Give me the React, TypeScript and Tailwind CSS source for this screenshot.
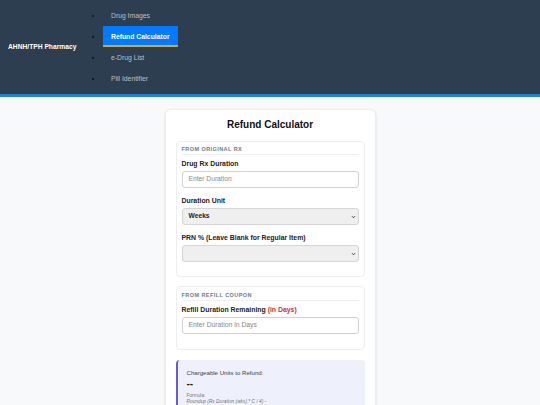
import React from 'react';

const navItems = ['Drug Images', 'Refund Calculator', 'e-Drug List', 'Pill Identifier'];

const Label: React.FC<{ children: React.ReactNode }> = ({ children }) => (
  <div className="text-[6.9px] leading-[9px] font-bold text-[#222] mb-[3px]">{children}</div>
);

const SectionHead: React.FC<{ children: React.ReactNode }> = ({ children }) => (
  <div className="text-[5.5px] leading-[6px] font-bold tracking-[0.08em] uppercase text-[#6b7a90] pb-[2px] border-b border-[#eef0f2] mb-[4px]">
    {children}
  </div>
);

const Chevron = () => (
  <svg viewBox="0 0 10 10" className="w-[5px] h-[5px] absolute right-[2px] top-1/2 -translate-y-1/2" fill="none" stroke="#333" strokeWidth="2">
    <path d="M2 3.5 L5 6.5 L8 3.5" />
  </svg>
);

export default function App() {
  return (
    <div className="min-h-[405px] bg-[#f7f9fb]" style={{ fontFamily: '"Liberation Sans", Arial, sans-serif' }}>
      <header className="h-[97px] bg-[#2c3e50] border-b-[3px] border-[#1e80e0] flex items-center px-[8px]">
        <div className="w-[95px] text-white font-bold text-[6.7px]">AHNH/TPH Pharmacy</div>
        <ul className="list-disc text-[#111] text-[6.8px] leading-none">
          {navItems.map((item) => {
            const active = item === 'Refund Calculator';
            return (
              <li key={item} className="h-[21px] marker:text-[#111]">
                <a
                  className={
                    active
                      ? 'block w-fit px-[8px] pt-[5px] pb-[3px] leading-[11px] text-[6.8px] font-bold text-white bg-[#007bff] border-b-[2px] border-[#d4a72c]'
                      : 'block w-fit px-[8px] pt-[5px] pb-[3px] leading-[11px] text-[6.8px] text-[#b9c0c8] border-b-[2px] border-transparent'
                  }
                >
                  {item}
                </a>
              </li>
            );
          })}
        </ul>
      </header>

      <main className="pt-[12px] flex justify-center">
        <div className="w-[211px] bg-white rounded-[6px] border border-[#eceef0] shadow-sm px-[10px] pt-[8px] pb-[10px]">
          <h1 className="text-center text-[10px] leading-[14px] font-bold text-[#111] mb-[9px]">Refund Calculator</h1>

          <section className="border border-[#eceef0] rounded-[4px] px-[5px] pt-[4px] pb-[14px]">
            <SectionHead>From Original Rx</SectionHead>
            <Label>Drug Rx Duration</Label>
            <div className="h-[17px] border border-[#cfd3d7] rounded-[3px] flex items-center px-[6px] text-[6.7px] text-[#888] mb-[8px]">
              Enter Duration
            </div>
            <Label>Duration Unit</Label>
            <div className="relative h-[17px] border border-[#d5d5d5] rounded-[3px] bg-[#efefef] flex items-center px-[6px] text-[6.7px] font-bold text-[#222] mb-[8px]">
              Weeks
              <Chevron />
            </div>
            <Label>PRN % (Leave Blank for Regular Item)</Label>
            <div className="relative h-[17px] border border-[#d5d5d5] rounded-[3px] bg-[#efefef]">
              <Chevron />
            </div>
          </section>

          <section className="mt-[9px] border border-[#eceef0] rounded-[4px] px-[5px] pt-[5px] pb-[15px]">
            <SectionHead>From Refill Coupon</SectionHead>
            <Label>
              Refill Duration Remaining <span className="text-[#d32f2f]">(in Days)</span>
            </Label>
            <div className="h-[17px] border border-[#cfd3d7] rounded-[3px] flex items-center px-[6px] text-[6.8px] text-[#888]">
              Enter Duration in Days
            </div>
          </section>

          <div className="mt-[10px] bg-[#eef0fc] border-l-[2px] border-[#6a5acd] rounded-[4px] pl-[9px] pt-[9px] pb-[8px]">
            <div className="text-[6.1px] leading-[8px] text-[#444]">Chargeable Units to Refund:</div>
            <div className="text-[10px] leading-[10px] font-bold text-[#222] mt-[2px]">--</div>
            <div className="text-[4.8px] leading-[6px] text-[#777] mt-[4px]">Formula:</div>
            <div className="text-[4.8px] leading-[6px] text-[#777] italic">Roundup (Rx Duration (wks) * C / 4) -</div>
          </div>
        </div>
      </main>
    </div>
  );
}
